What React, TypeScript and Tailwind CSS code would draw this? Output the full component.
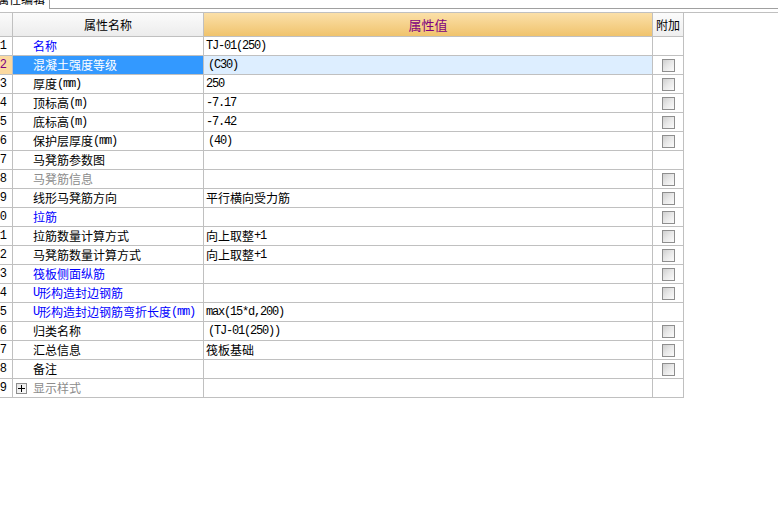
import React from "react";

type Row = {
  name: string;
  value?: string;
  color?: "blue" | "gray" | "black";
  cb: boolean;
  selected?: boolean;
  indent?: boolean;
  plus?: boolean;
};

const rows: Row[] = [
  { name: "名称", value: "TJ-01(250)", color: "blue", cb: false },
  { name: "混凝土强度等级", value: "(C30)", cb: true, selected: true, indent: true },
  { name: "厚度(mm)", value: "250", cb: true },
  { name: "顶标高(m)", value: "-7.17", cb: true },
  { name: "底标高(m)", value: "-7.42", cb: true },
  { name: "保护层厚度(mm)", value: "(40)", cb: true, indent: true },
  { name: "马凳筋参数图", cb: false },
  { name: "马凳筋信息", color: "gray", cb: true },
  { name: "线形马凳筋方向", value: "平行横向受力筋", cb: true },
  { name: "拉筋", color: "blue", cb: true },
  { name: "拉筋数量计算方式", value: "向上取整+1", cb: true },
  { name: "马凳筋数量计算方式", value: "向上取整+1", cb: true },
  { name: "筏板侧面纵筋", color: "blue", cb: true },
  { name: "U形构造封边钢筋", color: "blue", cb: true },
  { name: "U形构造封边钢筋弯折长度(mm)", value: "max(15*d,200)", color: "blue", cb: false },
  { name: "归类名称", value: "(TJ-01(250))", cb: true, indent: true },
  { name: "汇总信息", value: "筏板基础", cb: true },
  { name: "备注", cb: true },
  { name: "显示样式", color: "gray", cb: false, plus: true },
];

function Txt({ s }: { s: string }) {
  const parts = s.split(/([\x00-\x7f]+)/).filter((p) => p.length > 0);
  return (
    <>
      {parts.map((p, i) =>
        /^[\x00-\x7f]+$/.test(p) ? (
          <span
            key={i}
            className="whitespace-pre font-['Liberation_Mono',monospace] text-[12px] tracking-[-1.2px]"
          >
            {p}
          </span>
        ) : (
          <span key={i} className="font-['Noto_Sans_CJK_SC','Noto_Sans',sans-serif] text-[12px]">
            {p}
          </span>
        )
      )}
    </>
  );
}

function Check() {
  return (
    <div className="w-[13px] h-[13px] border border-[#8e8e8e] bg-gradient-to-br from-[#cfcfcf] via-[#e9e9e9] to-[#fbfbfb]" />
  );
}

function PlusBox() {
  return (
    <div className="w-[11px] h-[11px] border border-[#8e8e8e] bg-gradient-to-br from-[#e6e6e6] to-[#fafafa] flex items-center justify-center">
      <svg width="9" height="9" viewBox="0 0 9 9">
        <rect x="1" y="4" width="7" height="1" fill="#000" />
        <rect x="4" y="1" width="1" height="7" fill="#000" />
      </svg>
    </div>
  );
}

export default function App() {
  return (
    <div className="w-[778px] h-[515px] bg-white overflow-hidden leading-none text-black font-['Noto_Sans_CJK_SC','Noto_Sans',sans-serif]">
      {/* tab strip */}
      <div className="flex h-[9px]">
        <div className="w-[50px] h-[9px] border-r border-[#a0a0a0] overflow-hidden bg-white">
          <div className="-mt-[8px] -ml-[3px] text-[12px] leading-[14px] whitespace-nowrap">属性编辑</div>
        </div>
        <div className="flex-1 h-[9px] border-b border-[#a0a0a0]" />
      </div>
      <div className="h-[3px]" />
      <div className="h-px bg-[#c0c0c0] w-full" />
      {/* grid */}
      <div className="w-[684px] bg-[#c0c0c0] grid grid-cols-[12px_190px_448px_30px] gap-px pr-px pb-px">
        {/* header */}
        <div className="h-[23px] bg-gradient-to-b from-[#fbfbfb] to-[#ececec]" />
        <div className="h-[23px] bg-gradient-to-b from-[#fbfbfb] to-[#ececec] flex items-center justify-center text-[12px]">
          属性名称
        </div>
        <div className="h-[23px] bg-gradient-to-b from-[#fbe0a8] to-[#f0c36c] flex items-center justify-center text-[13px] text-[#800080]">
          属性值
        </div>
        <div className="h-[23px] bg-gradient-to-b from-[#fbfbfb] to-[#efefef] flex items-center justify-center text-[12px]">
          附加
        </div>
        {rows.map((r, i) => {
          const num = String(i + 1);
          const nameColor = r.selected
            ? "text-white"
            : r.color === "blue"
            ? "text-[#0000ff]"
            : r.color === "gray"
            ? "text-[#8c8c8c]"
            : "text-black";
          return (
            <React.Fragment key={i}>
              <div
                className={`h-[18px] flex items-center justify-end pr-[5px] overflow-hidden whitespace-nowrap font-['Liberation_Mono',monospace] text-[12px] ${
                  r.selected ? "bg-[#fbd9a0] text-[#800080]" : "bg-white text-black"
                }`}
              >
                {num}
              </div>
              <div
                className={`h-[18px] flex items-center whitespace-nowrap overflow-hidden ${
                  r.selected ? "bg-[#3399ff]" : "bg-white"
                } ${nameColor} ${r.plus ? "pl-[3px]" : "pl-[20px]"}`}
              >
                {r.plus && (
                  <div className="mr-[6px]">
                    <PlusBox />
                  </div>
                )}
                <Txt s={r.name} />
              </div>
              <div
                className={`h-[18px] flex items-center whitespace-nowrap overflow-hidden ${
                  r.indent ? "pl-[4px]" : "pl-[2px]"
                } ${r.selected ? "bg-[#ddeeff]" : "bg-white"}`}
              >
                {r.value && <Txt s={r.value} />}
              </div>
              <div className="h-[18px] bg-white flex items-center justify-center">
                {r.cb && <Check />}
              </div>
            </React.Fragment>
          );
        })}
      </div>
    </div>
  );
}
